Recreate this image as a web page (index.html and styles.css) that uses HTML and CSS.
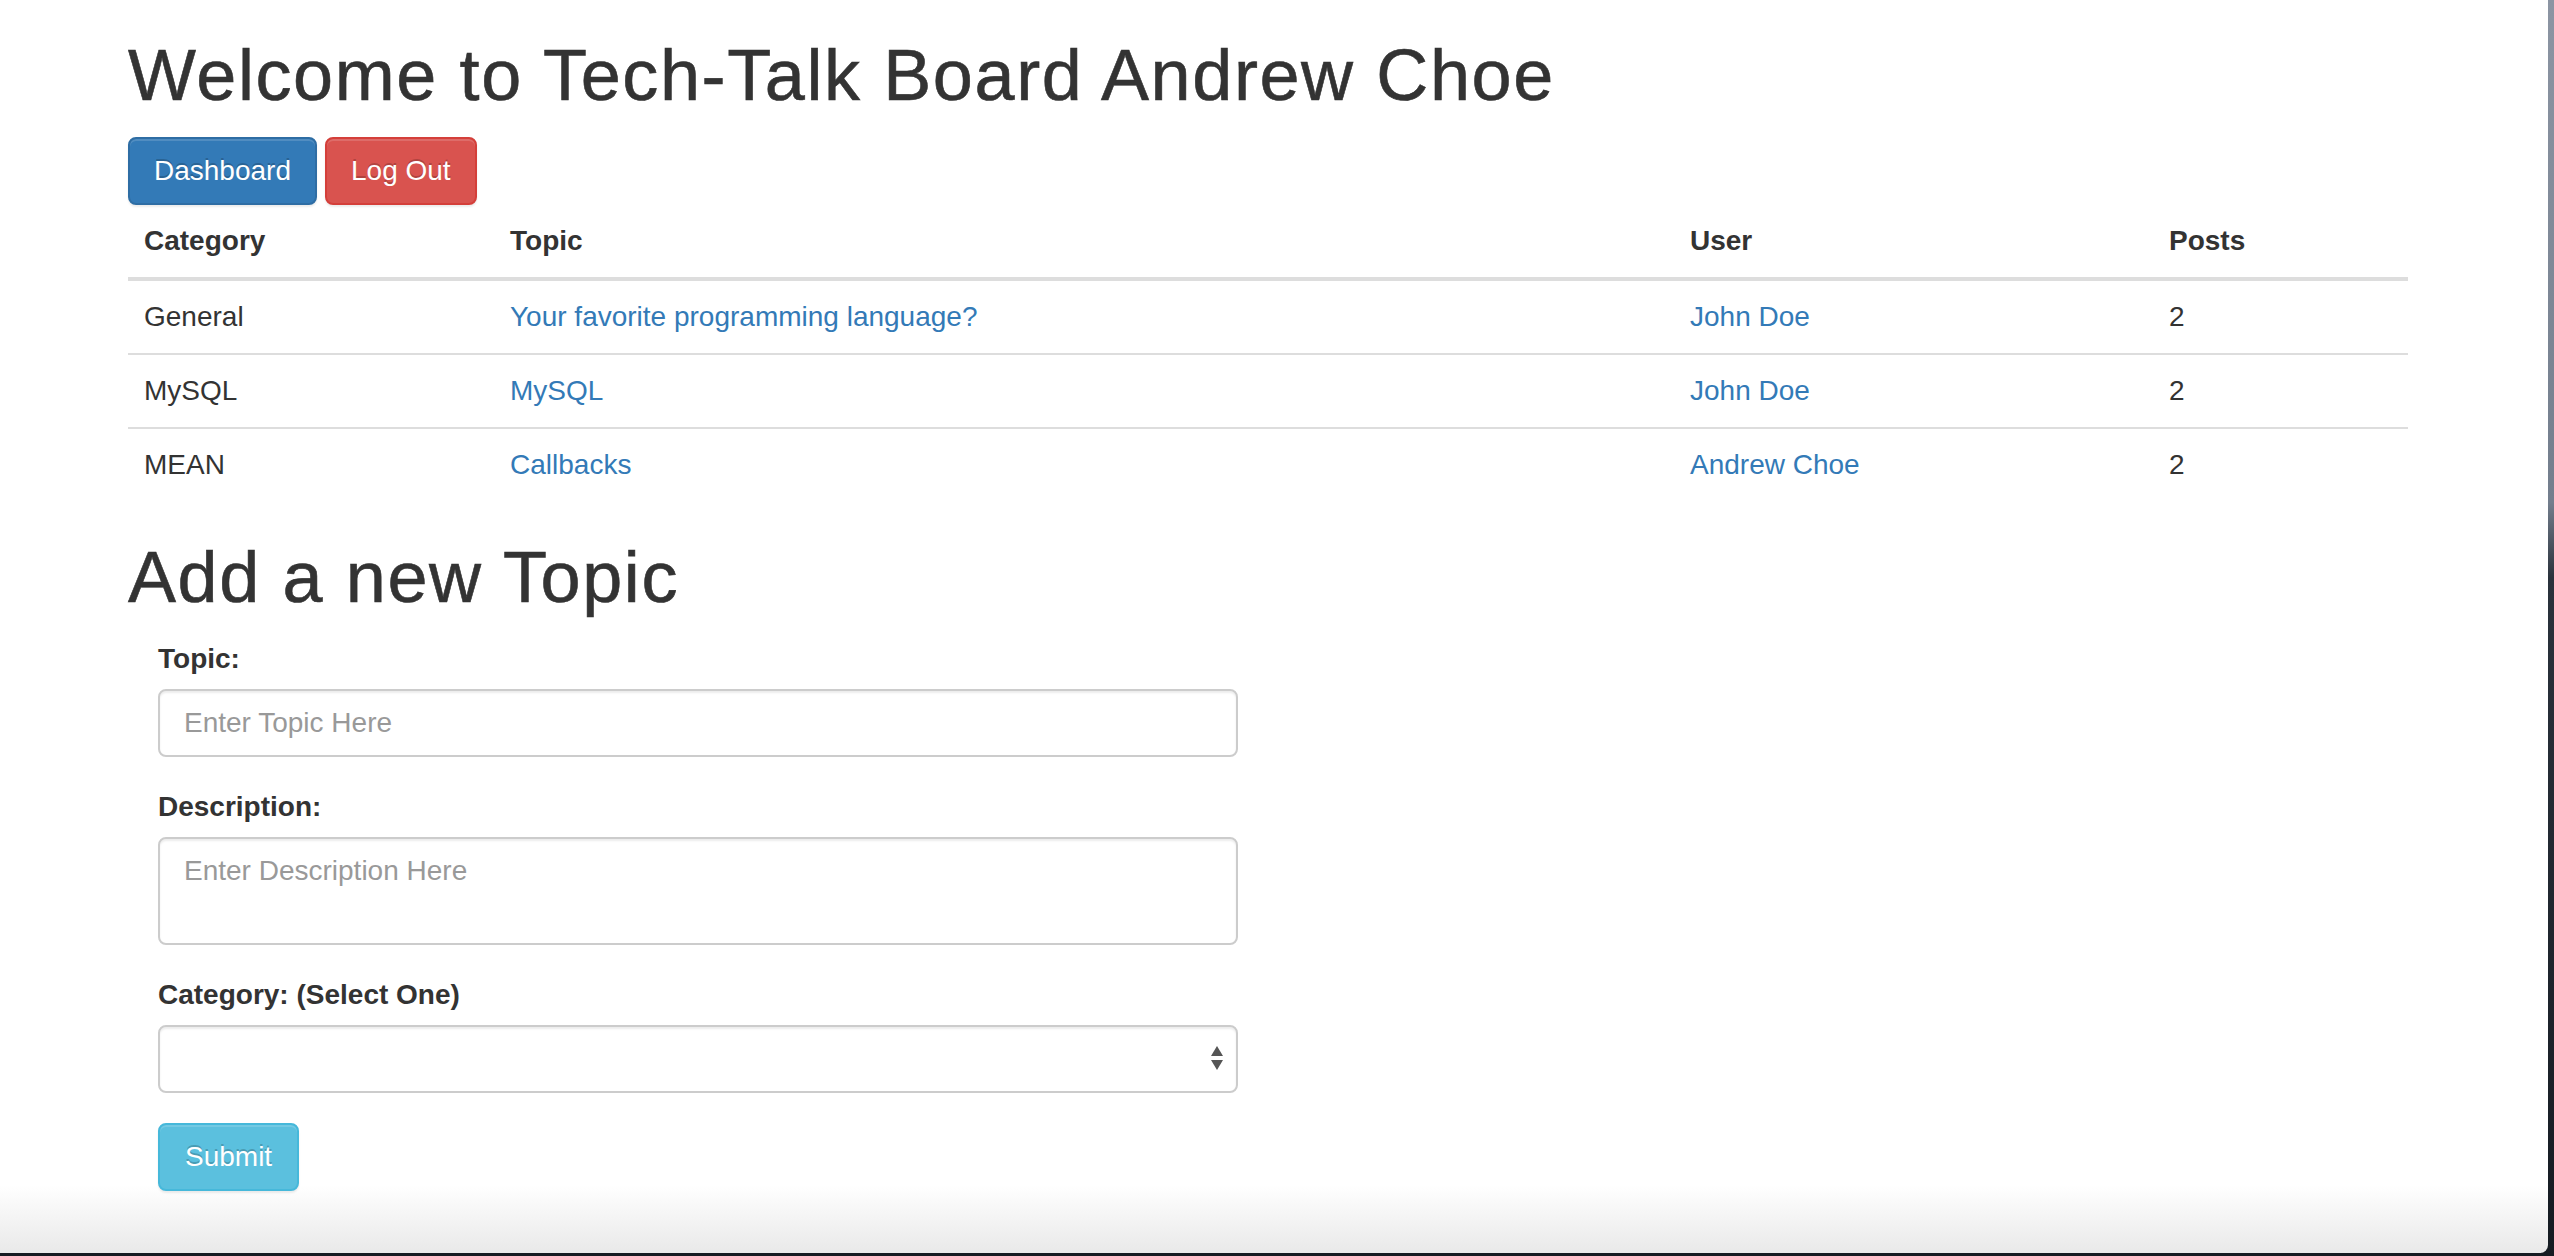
FILE: index.html
```html
<!DOCTYPE html>
<html lang="en">
<head>
<meta charset="utf-8">
<title>Tech-Talk Board</title>
<link rel="stylesheet" href="styles.css">
</head>
<body>
<div class="window">
  <div class="container">
    <h1 class="page-title">Welcome to Tech-Talk Board Andrew Choe</h1>
    <div class="actions">
      <a class="btn btn-primary" href="#">Dashboard</a>
      <a class="btn btn-danger" href="#">Log Out</a>
    </div>
    <table class="table">
      <colgroup>
        <col class="c-cat"><col class="c-topic"><col class="c-user"><col class="c-posts">
      </colgroup>
      <thead>
        <tr><th>Category</th><th>Topic</th><th>User</th><th>Posts</th></tr>
      </thead>
      <tbody>
        <tr><td>General</td><td><a href="#">Your favorite programming language?</a></td><td><a href="#">John Doe</a></td><td>2</td></tr>
        <tr><td>MySQL</td><td><a href="#">MySQL</a></td><td><a href="#">John Doe</a></td><td>2</td></tr>
        <tr><td>MEAN</td><td><a href="#">Callbacks</a></td><td><a href="#">Andrew Choe</a></td><td>2</td></tr>
      </tbody>
    </table>
    <h1 class="section-title">Add a new Topic</h1>
    <form class="topic-form">
      <div class="form-group">
        <label class="form-label">Topic:</label>
        <input class="form-control" type="text" placeholder="Enter Topic Here">
      </div>
      <div class="form-group">
        <label class="form-label">Description:</label>
        <textarea class="form-control textarea" rows="2" placeholder="Enter Description Here"></textarea>
      </div>
      <div class="form-group">
        <label class="form-label">Category: (Select One)</label>
        <div class="select-wrap">
          <select class="form-control select"><option></option></select>
          <svg class="select-arrows" width="14" height="26" viewBox="0 0 14 26" aria-hidden="true">
            <path d="M7 0 L13 10 L1 10 Z" fill="#555"/>
            <path d="M1 14 L13 14 L7 24 Z" fill="#555"/>
          </svg>
        </div>
      </div>
      <button class="btn btn-info" type="button">Submit</button>
    </form>
  </div>
</div>
</body>
</html>
```
FILE: styles.css
```css
html, body {
  margin: 0;
  padding: 0;
}
body {
  width: 2554px;
  height: 1256px;
  overflow: hidden;
  background: linear-gradient(to bottom, #8c95a3 0, #737e8d 40%, #2a323c 46%, #151b22 100%);
  font-family: "Liberation Sans", Arial, sans-serif;
  font-size: 28px;
  line-height: 40px;
  color: #333;
}
.window {
  width: 2548px;
  height: 1253px;
  background: linear-gradient(to bottom, #fff 0, #fff 1185px, #e9e9e9 1253px);
  border-bottom-right-radius: 8px;
  overflow: hidden;
}
.container {
  width: 2280px;
  margin-left: 98px;
  padding: 1px 30px 0;
}
.page-title, .section-title {
  font-size: 72px;
  line-height: 79px;
  font-weight: 500;
  letter-spacing: 1.6px;
  color: #333;
  -webkit-text-stroke: 0.6px #333;
}
.page-title {
  margin: 35px 0 22px;
}
.section-title {
  margin: 37px 0 22px;
}
.actions {
  display: flex;
  gap: 8px;
}
.btn {
  display: inline-block;
  box-sizing: border-box;
  height: 68px;
  padding: 12px 24px;
  border: 2px solid transparent;
  border-radius: 8px;
  font-family: inherit;
  font-size: 28px;
  line-height: 40px;
  color: #fff;
  text-decoration: none;
  text-shadow: 0 -2px 0 rgba(0, 0, 0, 0.2);
  box-shadow: inset 0 2px 0 rgba(255, 255, 255, 0.15), 0 2px 2px rgba(0, 0, 0, 0.075);
  cursor: pointer;
}
.btn-primary {
  background: #337ab7;
  border-color: #2e6da4;
}
.btn-danger {
  background: #d9534f;
  border-color: #d43f3a;
}
.btn-info {
  background: #5bc0de;
  border-color: #46b8da;
  padding: 12px 25px;
}
.table {
  width: 2280px;
  border-spacing: 0;
  margin: 0;
}
.c-cat { width: 366px; }
.c-topic { width: 1180px; }
.c-user { width: 479px; }
.c-posts { width: 255px; }
.table th, .table td {
  padding: 16px;
  text-align: left;
  vertical-align: top;
  line-height: 40px;
}
.table th {
  font-weight: bold;
  border-bottom: 4px solid #ddd;
}
.table td {
  border-top: 2px solid #ddd;
}
.table tbody tr:first-child td {
  border-top: 0;
}
.table a {
  color: #337ab7;
  text-decoration: none;
}
.topic-form {
  padding-left: 30px;
  width: 1080px;
}
.form-group {
  margin-bottom: 30px;
}
.form-label {
  display: block;
  font-weight: bold;
  margin-bottom: 10px;
}
.form-control {
  display: block;
  box-sizing: border-box;
  width: 1080px;
  height: 68px;
  padding: 12px 24px;
  margin: 0;
  border: 2px solid #ccc;
  border-radius: 8px;
  background: #fff;
  font-family: inherit;
  font-size: 28px;
  line-height: 40px;
  color: #555;
  box-shadow: inset 0 2px 2px rgba(0, 0, 0, 0.075);
}
.form-control::placeholder {
  color: #999;
}
.textarea {
  height: 108px;
  resize: none;
}
.select-wrap {
  position: relative;
  width: 1080px;
}
.select {
  appearance: none;
  -webkit-appearance: none;
}
.select-arrows {
  position: absolute;
  right: 14px;
  top: 21px;
}
```
